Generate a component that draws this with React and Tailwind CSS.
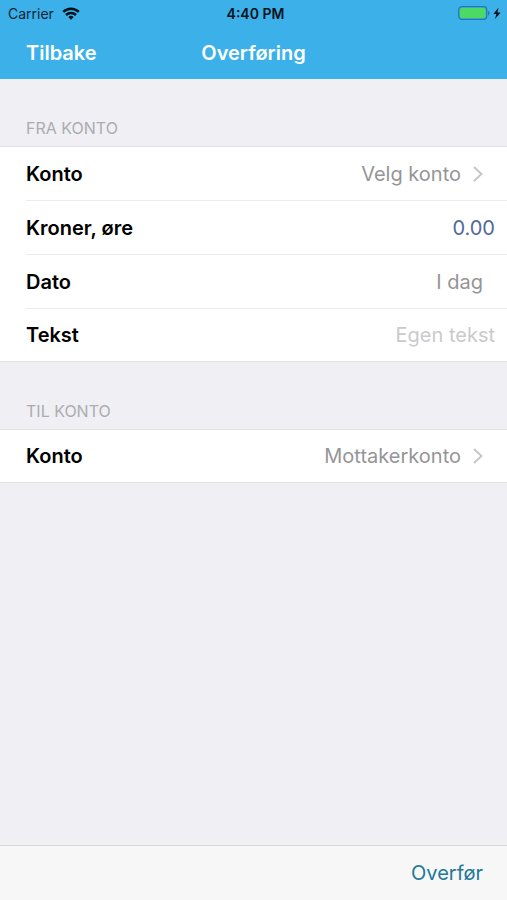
import React from 'react';

function StatusBar() {
  return (
    <div className="grid h-[26px] grid-cols-3 items-center pl-2 pr-1 text-[14px] text-[#0c2330]">
      <div className="flex items-center gap-2">
        <span>Carrier</span>
        <svg viewBox="0 0 18 13" className="h-[13px] w-[18px]" fill="none" stroke="#06121a" strokeWidth="2.5">
          <path d="M1.2 4.9a11.2 11.2 0 0 1 15.6 0" />
          <path d="M4 8a7.2 7.2 0 0 1 10 0" />
          <path d="M9 12.8 6.3 10.100a4 4 0 0 1 5.400 0z" fill="#06121a" stroke="none" />
        </svg>
      </div>
      <span className="text-center font-semibold text-[#06121a]">4:40 PM</span>
      <div className="flex items-center justify-end">
        <svg viewBox="0 0 45 14" className="h-[14px] w-[45px]">
          <rect x="0.7" y="0.7" width="28" height="12.6" rx="3" fill="none" stroke="#2878a3" strokeWidth="1.2" />
          <rect x="2" y="2" width="25.4" height="10" rx="1.6" fill="#4cd964" />
          <path d="M30 5v4.400c2-.6 2-3.800 0-4.400z" fill="#2878a3" />
          <path d="M40.600 1.500l-5.200 6.600h3l-1.400 5 5.600-6.700h-3.200z" fill="#06121a" />
        </svg>
      </div>
    </div>
  );
}

function Chevron() {
  return (
    <svg viewBox="0 0 10 16" className="ml-3 h-4 w-[10px]" fill="none" stroke="#c4c4c7" strokeWidth="1.8">
      <path d="M1 1l7.500 7-7.500 7" />
    </svg>
  );
}

function Section({ title, children }) {
  return (
    <section>
      <h2 className="flex h-[67px] items-end pb-2 pl-[26px] text-[16px] leading-[20px] text-[#acacb0]">{title}</h2>
      <div className="border-y border-[#e2e2e5] bg-white pl-[26px]">{children}</div>
    </section>
  );
}

const rowClass =
  'flex h-[54px] w-full items-center justify-between border-b border-[#ebebed] text-left last:h-[52px] last:border-b-0';

function PickerRow({ label, value, chevron }) {
  return (
    <button type="button" className={`${rowClass} pr-6`}>
      <span className="font-semibold">{label}</span>
      <span className="flex items-center text-[#959597]">
        {value}
        {chevron && <Chevron />}
      </span>
    </button>
  );
}

function InputRow({ id, label, ...props }) {
  return (
    <div className={`${rowClass} pr-3`}>
      <label htmlFor={id} className="font-semibold">{label}</label>
      <input
        id={id}
        className="w-0 flex-1 bg-transparent text-right text-[#4f6a99] outline-none placeholder:text-[#cacacc]"
        {...props}
      />
    </div>
  );
}

export default function App() {
  return (
    <div className="flex min-h-screen flex-col bg-[#efeff4] font-[Inter,sans-serif] text-[20px] text-black">
      <header className="bg-[#3bb0e9]">
        <StatusBar />
        <nav className="grid h-[53px] grid-cols-3 items-center px-[26px] font-semibold text-white">
          <button type="button" className="text-left">Tilbake</button>
          <h1 className="text-center">Overføring</h1>
        </nav>
      </header>

      <main className="flex-1">
        <Section title="FRA KONTO">
          <PickerRow label="Konto" value="Velg konto" chevron />
          <InputRow id="amount" label="Kroner, øre" defaultValue="0.00" inputMode="decimal" />
          <PickerRow label="Dato" value="I dag" />
          <InputRow id="text" label="Tekst" placeholder="Egen tekst" />
        </Section>
        <Section title="TIL KONTO">
          <PickerRow label="Konto" value="Mottakerkonto" chevron />
        </Section>
      </main>

      <footer className="flex h-[55px] items-center justify-end border-t border-[#d8d8db] bg-[#f7f7f7] px-6">
        <button type="button" className="text-[#23779a]">Overfør</button>
      </footer>
    </div>
  );
}
